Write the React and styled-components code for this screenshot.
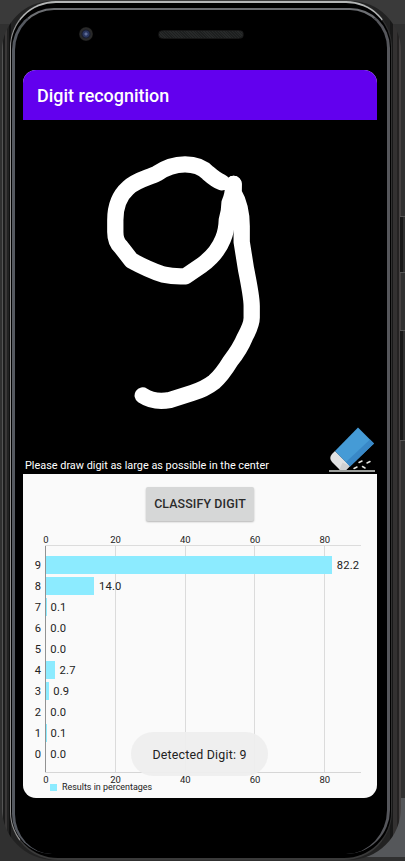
import React from "react";
import styled, { createGlobalStyle } from "styled-components";

const GlobalStyle = createGlobalStyle`
  * { box-sizing: border-box; }
  body { margin: 0; background: #303030; overflow: hidden; }
`;

const Desk = styled.main`
  position: relative;
  width: 405px;
  height: 861px;
  overflow: hidden;
  padding: 1px 4px 0 2px;
  background:
    linear-gradient(#55575a, #55575a) 100% 798px / 60px 59px no-repeat,
    linear-gradient(#3a3a3a 0 24px, #303030 24px);
  font-family: Roboto, "Liberation Sans", sans-serif;
`;

const Shell = styled.div`
  height: 859px;
  padding: 0 9px 0 8px;
  border-radius: 50px 50px 52px 52px;
  background: linear-gradient(
    to right,
    #555 0 1px, #1c1c1c 1px 3px, #3a3838 3px 5px, #222 5px 7px, #111 7px 9px,
    #222 9px 388px, #181818 388px 391px, #333131 391px 395px, #242222 395px 397px, #464242 397px
  );
`;

const Rim = styled.div`
  height: 859px;
  padding: 5px 1px 0;
  border-style: solid;
  border-width: 2px 1px 2px 1px;
  border-color: #b4b6b6 #303030 #3a3a3a #929292;
  border-radius: 46px 46px 48px 48px;
  background: #000;
`;

const Bezel = styled.div`
  height: 846px;
  padding: 0 10px 0 8px;
  border-style: solid;
  border-width: 2px 3px 0 3px;
  border-color: #6d6f73 #55565b transparent #555960;
  border-radius: 42px 40px 44px 40px;
`;

const SensorBar = styled.div`
  display: flex;
  align-items: flex-start;
  height: 60px;
  padding: 17px 0 0 56px;
`;

const Camera = styled.div`
  width: 14px;
  height: 14px;
  border-radius: 50%;
  background: radial-gradient(circle, #5f6c98 0 1px, #29365f 2px 3px, #171b2c 4px, #292929 5px 6px, #171717 7px);
`;

const Speaker = styled.div`
  width: 86px;
  height: 9px;
  margin: 3px 0 0 65px;
  border: 1px solid #161616;
  border-radius: 5px;
  background: repeating-linear-gradient(45deg, #272929 0 1px, #1d1f1f 1px 2px);
`;

const Screen = styled.section`
  position: relative;
  width: 354px;
  height: 728px;
  overflow: hidden;
  border-radius: 13px;
  background: #fafafa;
`;

const AppBar = styled.header`
  display: flex;
  align-items: center;
  height: 50px;
  padding: 2px 14px 0;
  background: #6200ee;
`;

const Title = styled.h1`
  margin: 0;
  color: #fff;
  font-size: 17.95px;
  font-weight: 500;
  line-height: 24px;
  white-space: nowrap;
`;

const DrawArea = styled.div`
  position: relative;
  display: flex;
  align-items: flex-end;
  justify-content: space-between;
  height: 354px;
  padding: 0 2px 1px;
  background: #000;
`;

const Stroke = styled.svg`
  position: absolute;
  inset: 0;
`;

const Hint = styled.p`
  margin: 0;
  color: #fff;
  font-size: 10.88px;
  line-height: 14px;
  white-space: nowrap;
`;

const EraserButton = styled.button`
  display: block;
  height: 46px;
  padding: 0;
  border: 0;
  background: none;
  svg { display: block; }
`;

const ClassifyButton = styled.button`
  display: block;
  width: 108px;
  height: 34px;
  margin: 13px 0 0 123px;
  padding: 0;
  border: 0;
  border-radius: 2px;
  background: #d6d7d7;
  box-shadow: 0 1px 2px rgba(0, 0, 0, 0.28);
  color: #2b2b2b;
  font: 500 12.4px/34px Roboto, sans-serif;
  letter-spacing: 0.12px;
  white-space: nowrap;
`;

const Chart = styled.div`
  padding: 12px 16px 0 0;
`;

const Ticks = styled.div`
  display: flex;
  height: 12px;
  margin-left: -12px;
  padding-top: 1px;
  color: #222;
  font-size: 9.5px;
  line-height: 12px;
`;

const Tick = styled.span`
  flex: 0 0 69.75px;
  text-align: center;
`;

const gridLine = (x) =>
  `linear-gradient(#dbdbdb, #dbdbdb) ${x}px 0 / 1px 100% no-repeat`;

const Plot = styled.div`
  height: 228px;
  margin-left: 22px;
  padding-top: 8.5px;
  border-top: 1px solid #dcdcdc;
  border-bottom: 1px solid #d6d6d6;
  background:
    linear-gradient(#929292, #929292) 0 0 / 1px 100% no-repeat,
    ${[70, 140, 209, 279].map(gridLine).join(", ")};
`;

const Row = styled.div`
  display: flex;
  align-items: center;
  height: 21px;
  margin-left: -14px;
  color: #222;
  font-size: 11.2px;
`;

const Digit = styled.span`
  width: 10px;
  margin-right: 4.5px;
  text-align: right;
`;

const Bar = styled.div`
  flex: none;
  height: 18px;
  background: #8cebff;
`;

const Value = styled.span`
  margin-left: 4.7px;
  letter-spacing: 0.15px;
`;

const Legend = styled.div`
  display: flex;
  align-items: center;
  margin: -2px 0 0 27px;
  color: #222;
  font-size: 8.93px;
  line-height: 9px;
`;

const Swatch = styled.i`
  width: 7px;
  height: 7px;
  margin-right: 5px;
  background: #8cebff;
`;

const Toast = styled.div`
  position: absolute;
  left: 108px;
  top: 662px;
  width: 137px;
  height: 44px;
  border-radius: 22px;
  background: rgba(238, 238, 238, 0.94);
  color: #222;
  font-size: 12.4px;
  letter-spacing: 0.2px;
  line-height: 45px;
  text-align: center;
  white-space: nowrap;
`;

const SideKey = styled.div`
  position: absolute;
  right: 0;
  top: ${(p) => p.$top}px;
  width: 5px;
  height: ${(p) => p.$height}px;
  border-top: 1px solid #555;
  border-bottom: 1px solid #555;
  background: linear-gradient(to right, #181818 0 3px, #303030 3px);
`;

const results = [
  [9, 82.2], [8, 14.0], [7, 0.1], [6, 0.0], [5, 0.0],
  [4, 2.7], [3, 0.9], [2, 0.0], [1, 0.1], [0, 0.0],
];

const PX_PER_PERCENT = 3.4875;

function Axis() {
  return (
    <Ticks>
      {[0, 20, 40, 60, 80].map((n) => <Tick key={n}>{n}</Tick>)}
    </Ticks>
  );
}

function DrawnDigit() {
  return (
    <Stroke width="354" height="354" viewBox="23 120 354 354" fill="none" stroke="#fff" strokeWidth="16.3" strokeLinecap="round" strokeLinejoin="round">
      <path d="M221.7 182.3 Q216 180 208 173 Q200 164.3 185 164.3 Q170 164.3 157 173.5 C148 178 136 180 128 188 C119 196 115.3 208 115.3 220 V232 Q115.3 242 121 247 L131.5 260.5 Q149 270 163 274.5 Q174 277 185.5 276.3 L202 265 Q217 254 223 239 Q226.5 231 226.8 220 Q229.5 211 229.5 203 Q233 195 233.5 184" />
      <path d="M233.7 184 V193 Q242 207 241.7 228 V242 L246 269 Q251.7 297 251.7 306 V317 Q252 324 245 337 Q240 349 230.5 361 Q222 375 214 382 Q205 389 192 393 L170 400 Q154 403 142.7 395.5" />
    </Stroke>
  );
}

function Eraser() {
  return (
    <svg width="46" height="46" viewBox="329 427 46 46">
      <path d="M329 471h46" stroke="#d0d5d1" strokeWidth="1.5" />
      <path d="M335 451 332 454Q328.5 458 332 462L340 470H346L350 466Z" fill="#e1e2e3" />
      <path d="M342.5 462.5 339.5 469.5 340 470H346L350 466Z" fill="#cfd0d1" />
      <path d="M358 427.5 374 443.5 350 466.5 335 451Z" fill="#459bd6" />
      <path d="M374 443.5 350 466.5 346 462 370 439.5Z" fill="#3988c7" />
      <g stroke="#e4e5e1" strokeWidth="1.5" strokeLinecap="round">
        <path d="M359 462.5 362 461M367 463 370 461.5M354 468.5 357 467M362.5 466.5 365 468" />
      </g>
    </svg>
  );
}

export default function App() {
  return (
    <>
      <GlobalStyle />
      <Desk>
        <Shell>
          <Rim>
            <Bezel>
              <SensorBar>
                <Camera />
                <Speaker />
              </SensorBar>
              <Screen>
                <AppBar><Title>Digit recognition</Title></AppBar>
                <DrawArea>
                  <DrawnDigit />
                  <Hint>Please draw digit as large as possible in the center</Hint>
                  <EraserButton aria-label="Erase"><Eraser /></EraserButton>
                </DrawArea>
                <ClassifyButton>CLASSIFY DIGIT</ClassifyButton>
                <Chart>
                  <Axis />
                  <Plot>
                    {results.map(([digit, value]) => (
                      <Row key={digit}>
                        <Digit>{digit}</Digit>
                        <Bar style={{ width: value * PX_PER_PERCENT }} />
                        <Value>{value.toFixed(1)}</Value>
                      </Row>
                    ))}
                  </Plot>
                  <Axis />
                  <Legend><Swatch />Results in percentages</Legend>
                </Chart>
                <Toast>Detected Digit: 9</Toast>
              </Screen>
            </Bezel>
          </Rim>
        </Shell>
        <SideKey $top={216} $height={57} />
        <SideKey $top={330} $height={111} />
      </Desk>
    </>
  );
}
